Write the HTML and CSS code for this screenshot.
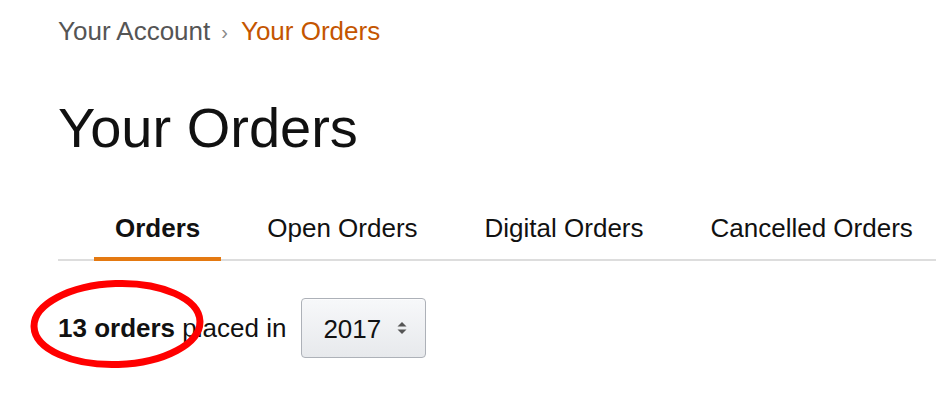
FILE: index.html
```html
<!DOCTYPE html>
<html lang="en">
<head>
<meta charset="utf-8">
<title>Your Orders</title>
<link rel="stylesheet" href="styles.css">
</head>
<body>
<div class="page">
  <nav class="breadcrumb">
    <a class="crumb" href="#">Your Account</a><span class="sep">›</span><span class="crumb current">Your Orders</span>
  </nav>
  <h1 class="title">Your Orders</h1>
  <ul class="tabs">
    <li class="tab active">Orders</li>
    <li class="tab">Open Orders</li>
    <li class="tab">Digital Orders</li>
    <li class="tab">Cancelled Orders</li>
  </ul>
  <div class="summary">
    <span class="count-text"><b>13 orders</b> placed in</span>
    <span class="select">
      <span class="select-value">2017</span>
      <svg class="select-arrows" width="10" height="12" viewBox="0 0 10 12"><path d="M5 0 L9.5 4.5 H0.5 Z" fill="#555"/><path d="M5 12 L9.5 7.5 H0.5 Z" fill="#555"/></svg>
    </span>
  </div>
  <svg class="annotation" width="190" height="100" viewBox="0 0 190 100"><ellipse cx="87" cy="49" rx="83" ry="40.5" fill="none" stroke="#ff0000" stroke-width="7" transform="rotate(-2 87 49)"/></svg>
</div>
</body>
</html>
```

FILE: styles.css
```css
* { box-sizing: border-box; }
html, body {
  margin: 0;
  background: #fff;
}
body {
  font-family: "Liberation Sans", Arial, sans-serif;
  color: #111;
}
.page {
  position: relative;
  min-height: 400px;
  padding: 16px 0 0 58px;
}
.breadcrumb {
  font-size: 26px;
  line-height: 30px;
  height: 30px;
  white-space: nowrap;
}
.crumb {
  color: #555;
  text-decoration: none;
}
.crumb.current {
  color: #c45500;
}
.sep {
  display: inline-block;
  font-size: 20px;
  color: #888;
  margin: 0 13px 0 11px;
  vertical-align: 1px;
}
.title {
  margin: 50px 0 0;
  font-size: 56px;
  line-height: 64px;
  font-weight: normal;
  color: #111;
}
.tabs {
  list-style: none;
  margin: 53px 0 0;
  padding: 0 0 0 36px;
  display: flex;
  gap: 25px;
  border-bottom: 2px solid #ddd;
}
.tab {
  font-size: 26px;
  line-height: 30px;
  padding: 0 21px 14px;
  color: #111;
  white-space: nowrap;
}
.tab.active {
  font-weight: bold;
  border-bottom: 4px solid #e47911;
  margin-bottom: -2px;
}
.summary {
  margin-top: 37px;
  display: flex;
  align-items: center;
  gap: 15px;
  font-size: 26px;
  line-height: 30px;
}
.count-text b {
  font-weight: bold;
}
.select {
  display: flex;
  align-items: center;
  height: 60px;
  width: 125px;
  padding: 0 18px 0 21px;
  border: 1px solid #adb1b8;
  border-radius: 4px;
  background: linear-gradient(#f7f8fa, #e7e9ec);
  box-shadow: inset 0 1px 0 rgba(255,255,255,0.6);
  color: #111;
}
.select-value {
  flex: 1;
  padding-top: 2px;
}
.select-arrows {
  display: block;
}
.annotation {
  position: absolute;
  left: 30px;
  top: 275px;
  pointer-events: none;
}
```
